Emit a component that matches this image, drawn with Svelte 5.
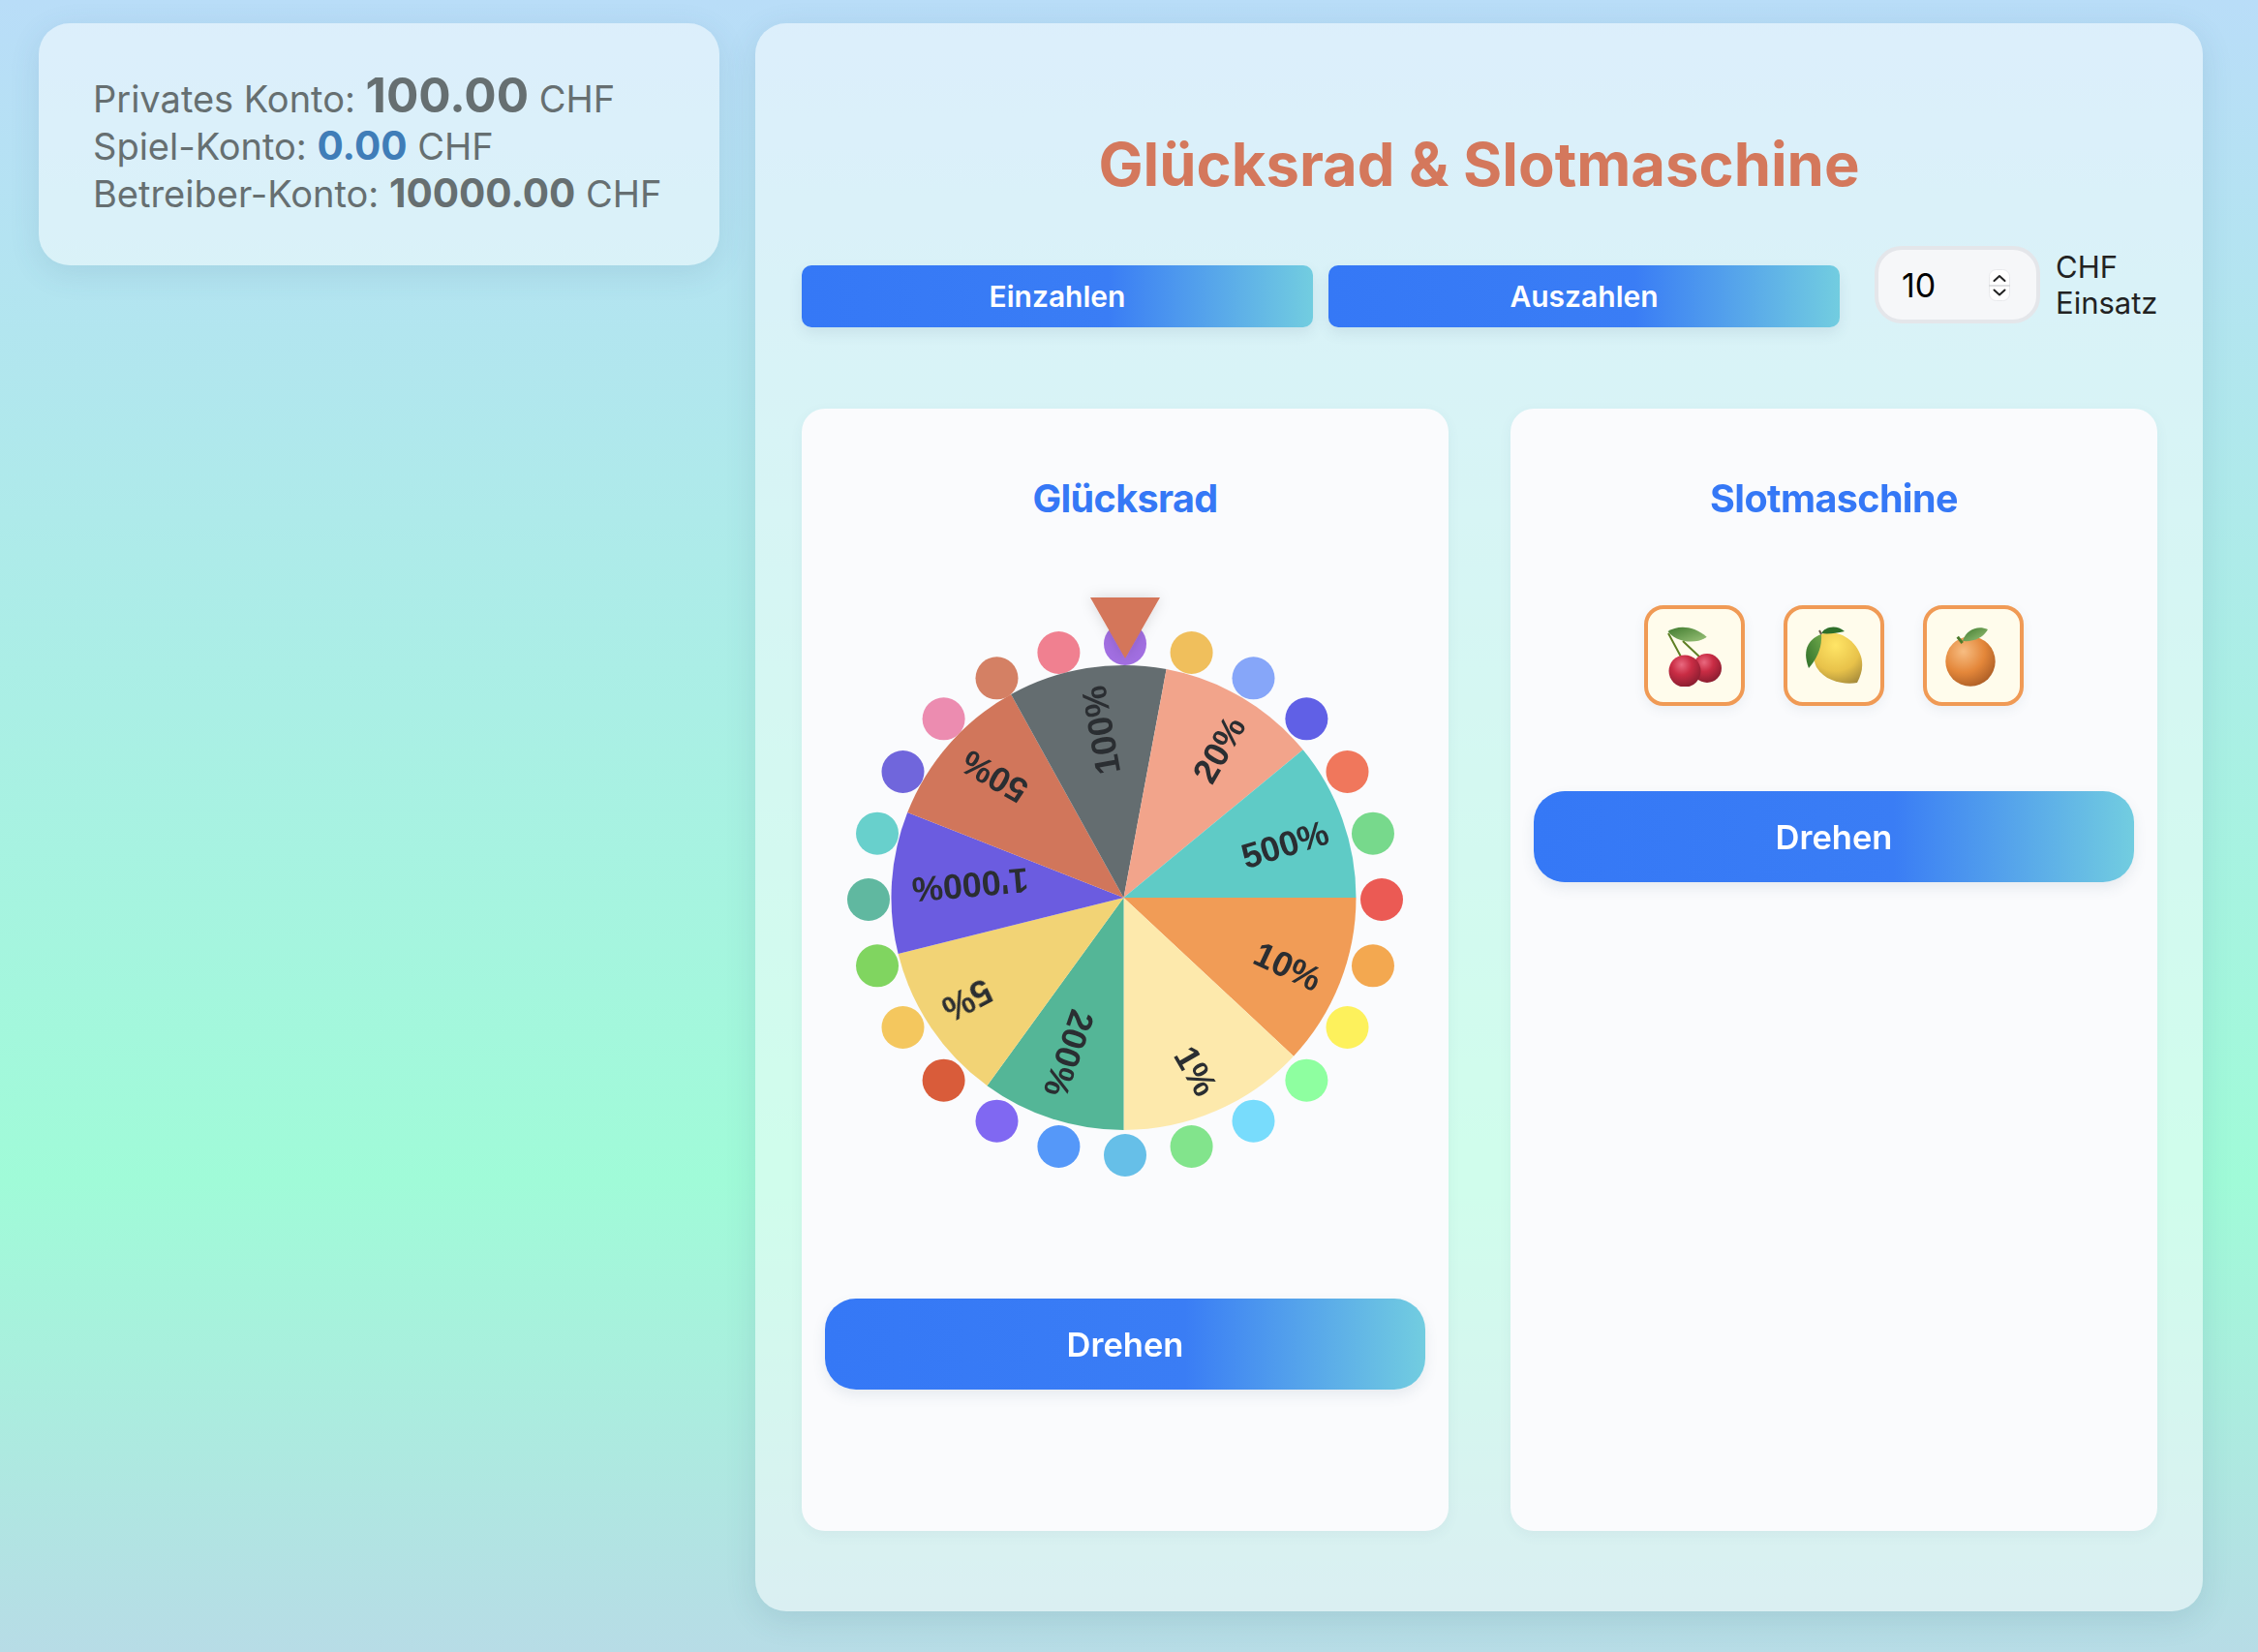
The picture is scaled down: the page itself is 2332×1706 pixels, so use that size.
<script>
  const cx = 308.5, cy = 330, r = 240;
  const sectors = [
    { a0: 0, a1: 43, color: '#f19c56', label: '10%', lx: 478, ly: 401, rot: 25 },
    { a0: 43, a1: 90, color: '#fde9ac', label: '1%', lx: 383, ly: 509, rot: 60 },
    { a0: 90, a1: 126, color: '#54b697', label: '200%', lx: 252, ly: 491, rot: 109 },
    { a0: 126, a1: 166, color: '#f2d375', label: '5%', lx: 147, ly: 436, rot: 152 },
    { a0: 166, a1: 201.5, color: '#6b5ce0', label: "1'000%", lx: 150, ly: 317, rot: 175 },
    { a0: 201.5, a1: 241, color: '#d1765b', label: '50%', lx: 175, ly: 205, rot: 210 },
    { a0: 241, a1: 280.6, color: '#646d70', label: '100%', lx: 285, ly: 157, rot: 260 },
    { a0: 280.6, a1: 320.5, color: '#f2a48b', label: '20%', lx: 407, ly: 177, rot: 300 },
    { a0: 320.5, a1: 360, color: '#5fcbc6', label: '500%', lx: 475, ly: 275, rot: 343 }
  ];
  const pt = (a, rad = r) => {
    const t = (a * Math.PI) / 180;
    return `${(cx + rad * Math.cos(t)).toFixed(2)} ${(cy + rad * Math.sin(t)).toFixed(2)}`;
  };
  const slice = (s) => `M${cx} ${cy}L${pt(s.a0)}A${r} ${r} 0 0 1 ${pt(s.a1)}Z`;
  const dotColors = ['#a26fe2','#f0bf5c','#86a6f9','#6060e6','#f0775c','#77d98c','#eb5a54','#f3a850','#fdf15c','#8effa0','#78dcfc','#82e48c','#66bfe8','#5598f9','#8068f2','#d95c3a','#f4c75e','#80d560','#60b8a0','#68d0cc','#7066dc','#ec8cb0','#d48064','#f08090'];
  const dots = dotColors.map((color, i) => {
    const t = (i * 15 * Math.PI) / 180;
    return { color, x: 310 + 265 * Math.sin(t), y: 332 - 264 * Math.cos(t) };
  });
</script>

<div class="page">
  <aside class="balance">
    <div>Privates Konto: <strong class="big">100.00</strong> CHF</div>
    <div>Spiel-Konto: <strong class="blue">0.00</strong> CHF</div>
    <div>Betreiber-Konto: <strong>10000.00</strong> CHF</div>
  </aside>

  <main class="panel">
    <h1>Glücksrad &amp; Slotmaschine</h1>

    <div class="controls">
      <button class="small">Einzahlen</button>
      <button class="small">Auszahlen</button>
      <div class="stake">
        <input type="number" value="10" aria-label="Einsatz" />
        <svg class="spin" viewBox="0 0 22 33" width="22" height="33">
          <rect x="0.500" y="0.500" width="21" height="32" rx="7" fill="#fff" stroke="#e8e9ec" />
          <path d="M0 17h22" stroke="#d4d6d9" stroke-width="1.500" />
          <path d="M5.500 12l5.500-5 5.500 5M5.500 21.500l5.500 5 5.500-5" fill="none" stroke="#222" stroke-width="2" stroke-linecap="round" stroke-linejoin="round" />
        </svg>
      </div>
      <span class="unit">CHF Einsatz</span>
    </div>

    <div class="games">
      <section class="card">
        <h2>Glücksrad</h2>
        <svg class="wheel" viewBox="0 0 620 640" width="620" height="640">
          <defs>
            <filter id="soft" x="-10%" y="-10%" width="120%" height="120%"><feGaussianBlur stdDeviation="0.7" /></filter>
            <filter id="tip" x="-30%" y="-30%" width="160%" height="160%"><feDropShadow dx="0" dy="0" stdDeviation="7" flood-color="#000" flood-opacity="0.14" /></filter>
          </defs>
          {#each dots as d}
            <circle cx={d.x} cy={d.y} r="22" fill={d.color} />
          {/each}
          {#each sectors as s}
            <path d={slice(s)} fill={s.color} />
          {/each}
          <g filter="url(#soft)">
            {#each sectors as s}
              <text class="label" x="0" y="0" text-anchor="middle" dominant-baseline="central" transform="translate({s.lx} {s.ly}) rotate({s.rot})">{s.label}</text>
            {/each}
          </g>
          <path d="M274 20h72l-36 63z" fill="#d4765a" filter="url(#tip)" />
        </svg>
        <button class="big-btn">Drehen</button>
      </section>

      <section class="card">
        <h2>Slotmaschine</h2>
        <div class="reels">
          <div class="reel">
            <svg viewBox="0 0 64 64" width="64" height="64" aria-label="Kirsche">
              <defs>
                <radialGradient id="ch" cx="0.4" cy="0.3" r="0.8"><stop offset="0" stop-color="#e9697f" /><stop offset="0.4" stop-color="#c92c44" /><stop offset="1" stop-color="#7d1a2c" /></radialGradient>
                <linearGradient id="lf" x1="0" y1="0" x2="1" y2="1"><stop offset="0" stop-color="#3f7a2e" /><stop offset="1" stop-color="#9cc47a" /></linearGradient>
              </defs>
              <path d="M5 9L19 35M20 17L39 35" stroke="#5f7f24" stroke-width="2" fill="none" />
              <circle cx="45" cy="45" r="15" fill="url(#ch)" />
              <circle cx="22" cy="48" r="16.500" fill="url(#ch)" />
              <path d="M4.500 7C14 1 30 0 44.700 12.700C36 20 14 20 4.500 7Z" fill="url(#lf)" />
            </svg>
          </div>
          <div class="reel">
            <svg viewBox="0 0 64 64" width="64" height="64" aria-label="Zitrone">
              <defs>
                <radialGradient id="lm" cx="0.45" cy="0.25" r="0.85"><stop offset="0" stop-color="#ffe566" /><stop offset="0.6" stop-color="#e8c24a" /><stop offset="1" stop-color="#a58a3a" /></radialGradient>
                <linearGradient id="lf2" x1="1" y1="0" x2="0" y2="1"><stop offset="0" stop-color="#6ea84a" /><stop offset="1" stop-color="#2f6f2a" /></linearGradient>
              </defs>
              <path d="M19 10C34 4 54 14 60 33C63 44 60 52 56 60C44 62 24 60 14 44C9 34 10 18 19 10Z" fill="url(#lm)" />
              <path d="M19 9C22 3 34 -1 43 7C34 9 26 10 19 9Z" fill="#2f6f2a" />
              <path d="M19 10C8 14 -2 24 6 45C14 36 20 24 19 10Z" fill="url(#lf2)" />
              <path d="M19 10L17 6" stroke="#6b5a4a" stroke-width="2" />
            </svg>
          </div>
          <div class="reel">
            <svg viewBox="0 0 64 64" width="64" height="64" aria-label="Orange">
              <defs>
                <radialGradient id="or" cx="0.36" cy="0.3" r="0.85"><stop offset="0" stop-color="#f7bd82" /><stop offset="0.5" stop-color="#e4873a" /><stop offset="1" stop-color="#9c5220" /></radialGradient>
              </defs>
              <circle cx="29" cy="38" r="25.700" fill="url(#or)" />
              <path d="M21 17C24 6 36 0 47 5C42 14 32 18 21 17Z" fill="url(#lf)" />
              <path d="M15.700 12.700L20.700 19" stroke="#4c7a2a" stroke-width="3" />
            </svg>
          </div>
        </div>
        <button class="big-btn">Drehen</button>
      </section>
    </div>
  </main>
</div>

<style>
  :global(body) {
    margin: 0;
    font-family: Inter, "Liberation Sans", sans-serif;
    background: linear-gradient(180deg, #b9ddf8 0%, #a0fbd8 71.500%, #b7dce6 100%);
    min-height: 1706px;
  }
  .page {
    display: flex;
    align-items: flex-start;
    gap: 37px;
    padding: 24px 57px 42px 40px;
    height: 1706px;
    box-sizing: border-box;
  }
  .balance {
    flex: 0 0 703px;
    box-sizing: border-box;
    height: 250px;
    padding: 50px 56px;
    border-radius: 32px;
    background: rgba(255, 255, 255, 0.5);
    box-shadow: 0 8px 32px rgba(60, 90, 120, 0.12);
    color: #666f71;
    font-size: 38px;
    line-height: 49px;
    white-space: nowrap;
  }
  .balance strong { font-weight: 700; font-size: 40.500px; line-height: 1; }
  .balance .big { font-size: 49.500px; }
  .balance .blue { color: #3f7db8; }
  .panel {
    flex: 1;
    min-width: 0;
    box-sizing: border-box;
    height: 1640px;
    padding: 108px 48px 0;
    border-radius: 32px;
    background: rgba(255, 255, 255, 0.5);
    box-shadow: 0 8px 32px rgba(60, 90, 120, 0.14);
  }
  h1 {
    margin: 0;
    text-align: center;
    color: #d4785c;
    font-size: 61.500px;
    line-height: 76px;
    font-weight: 700;
  }
  .controls {
    display: flex;
    align-items: center;
    margin-top: 46px;
    height: 80px;
  }
  button {
    border: 0;
    color: #fff;
    font-family: inherit;
    font-weight: 600;
    background: linear-gradient(90deg, #3578f6 0%, #3a7df5 60%, #72cde0 100%);
    box-shadow: 0 6px 14px rgba(60, 90, 120, 0.1);
  }
  .small {
    flex: 0 0 528px;
    height: 64px;
    margin-top: 24px;
    margin-right: 16px;
    border-radius: 10px;
    font-size: 30px;
  }
  .small + .small { margin-right: 36px; }
  .stake {
    position: relative;
    flex: 0 0 171px;
    height: 80px;
  }
  input {
    box-sizing: border-box;
    width: 100%;
    height: 100%;
    padding: 0 24px;
    border: 4px solid #e4e6ea;
    border-radius: 28px;
    background: #f6f7f9;
    color: #000;
    font-family: inherit;
    font-size: 34px;
    outline: none;
    appearance: textfield;
  }
  .spin {
    position: absolute;
    left: 118px;
    top: 24px;
  }
  .unit {
    flex: 0 0 104px;
    margin-left: 16px;
    color: #222;
    font-size: 31px;
    line-height: 37px;
  }
  .games {
    display: grid;
    grid-template-columns: 668px 668px;
    gap: 64px;
    margin-top: 88px;
  }
  .card {
    box-sizing: border-box;
    height: 1159px;
    padding: 0 24px;
    border-radius: 24px;
    background: #fafbfd;
    box-shadow: 0 4px 14px rgba(60, 90, 120, 0.06);
  }
  h2 {
    margin: 0;
    padding-top: 68px;
    text-align: center;
    color: #3578f6;
    font-size: 39.500px;
    line-height: 50px;
    font-weight: 700;
    letter-spacing: -0.6px;
  }
  .wheel {
    display: block;
    margin-top: 57px;
  }
  .label {
    font-family: "Liberation Sans", Arial, sans-serif;
    font-weight: 700;
    font-size: 36px;
    fill: #2b2d30;
  }
  .big-btn {
    display: block;
    width: 620px;
    height: 94px;
    margin-top: 104px;
    border-radius: 32px;
    font-size: 34.500px;
  }
  .reels {
    display: flex;
    justify-content: center;
    gap: 40px;
    margin-top: 85px;
  }
  .reel {
    box-sizing: border-box;
    display: flex;
    align-items: center;
    justify-content: center;
    width: 104px;
    height: 104px;
    border: 4px solid #f09a55;
    border-radius: 20px;
    background: #fffcec;
    box-shadow: 0 4px 12px rgba(60, 90, 120, 0.08);
  }
  .reels + .big-btn { margin-top: 88px; }
</style>
